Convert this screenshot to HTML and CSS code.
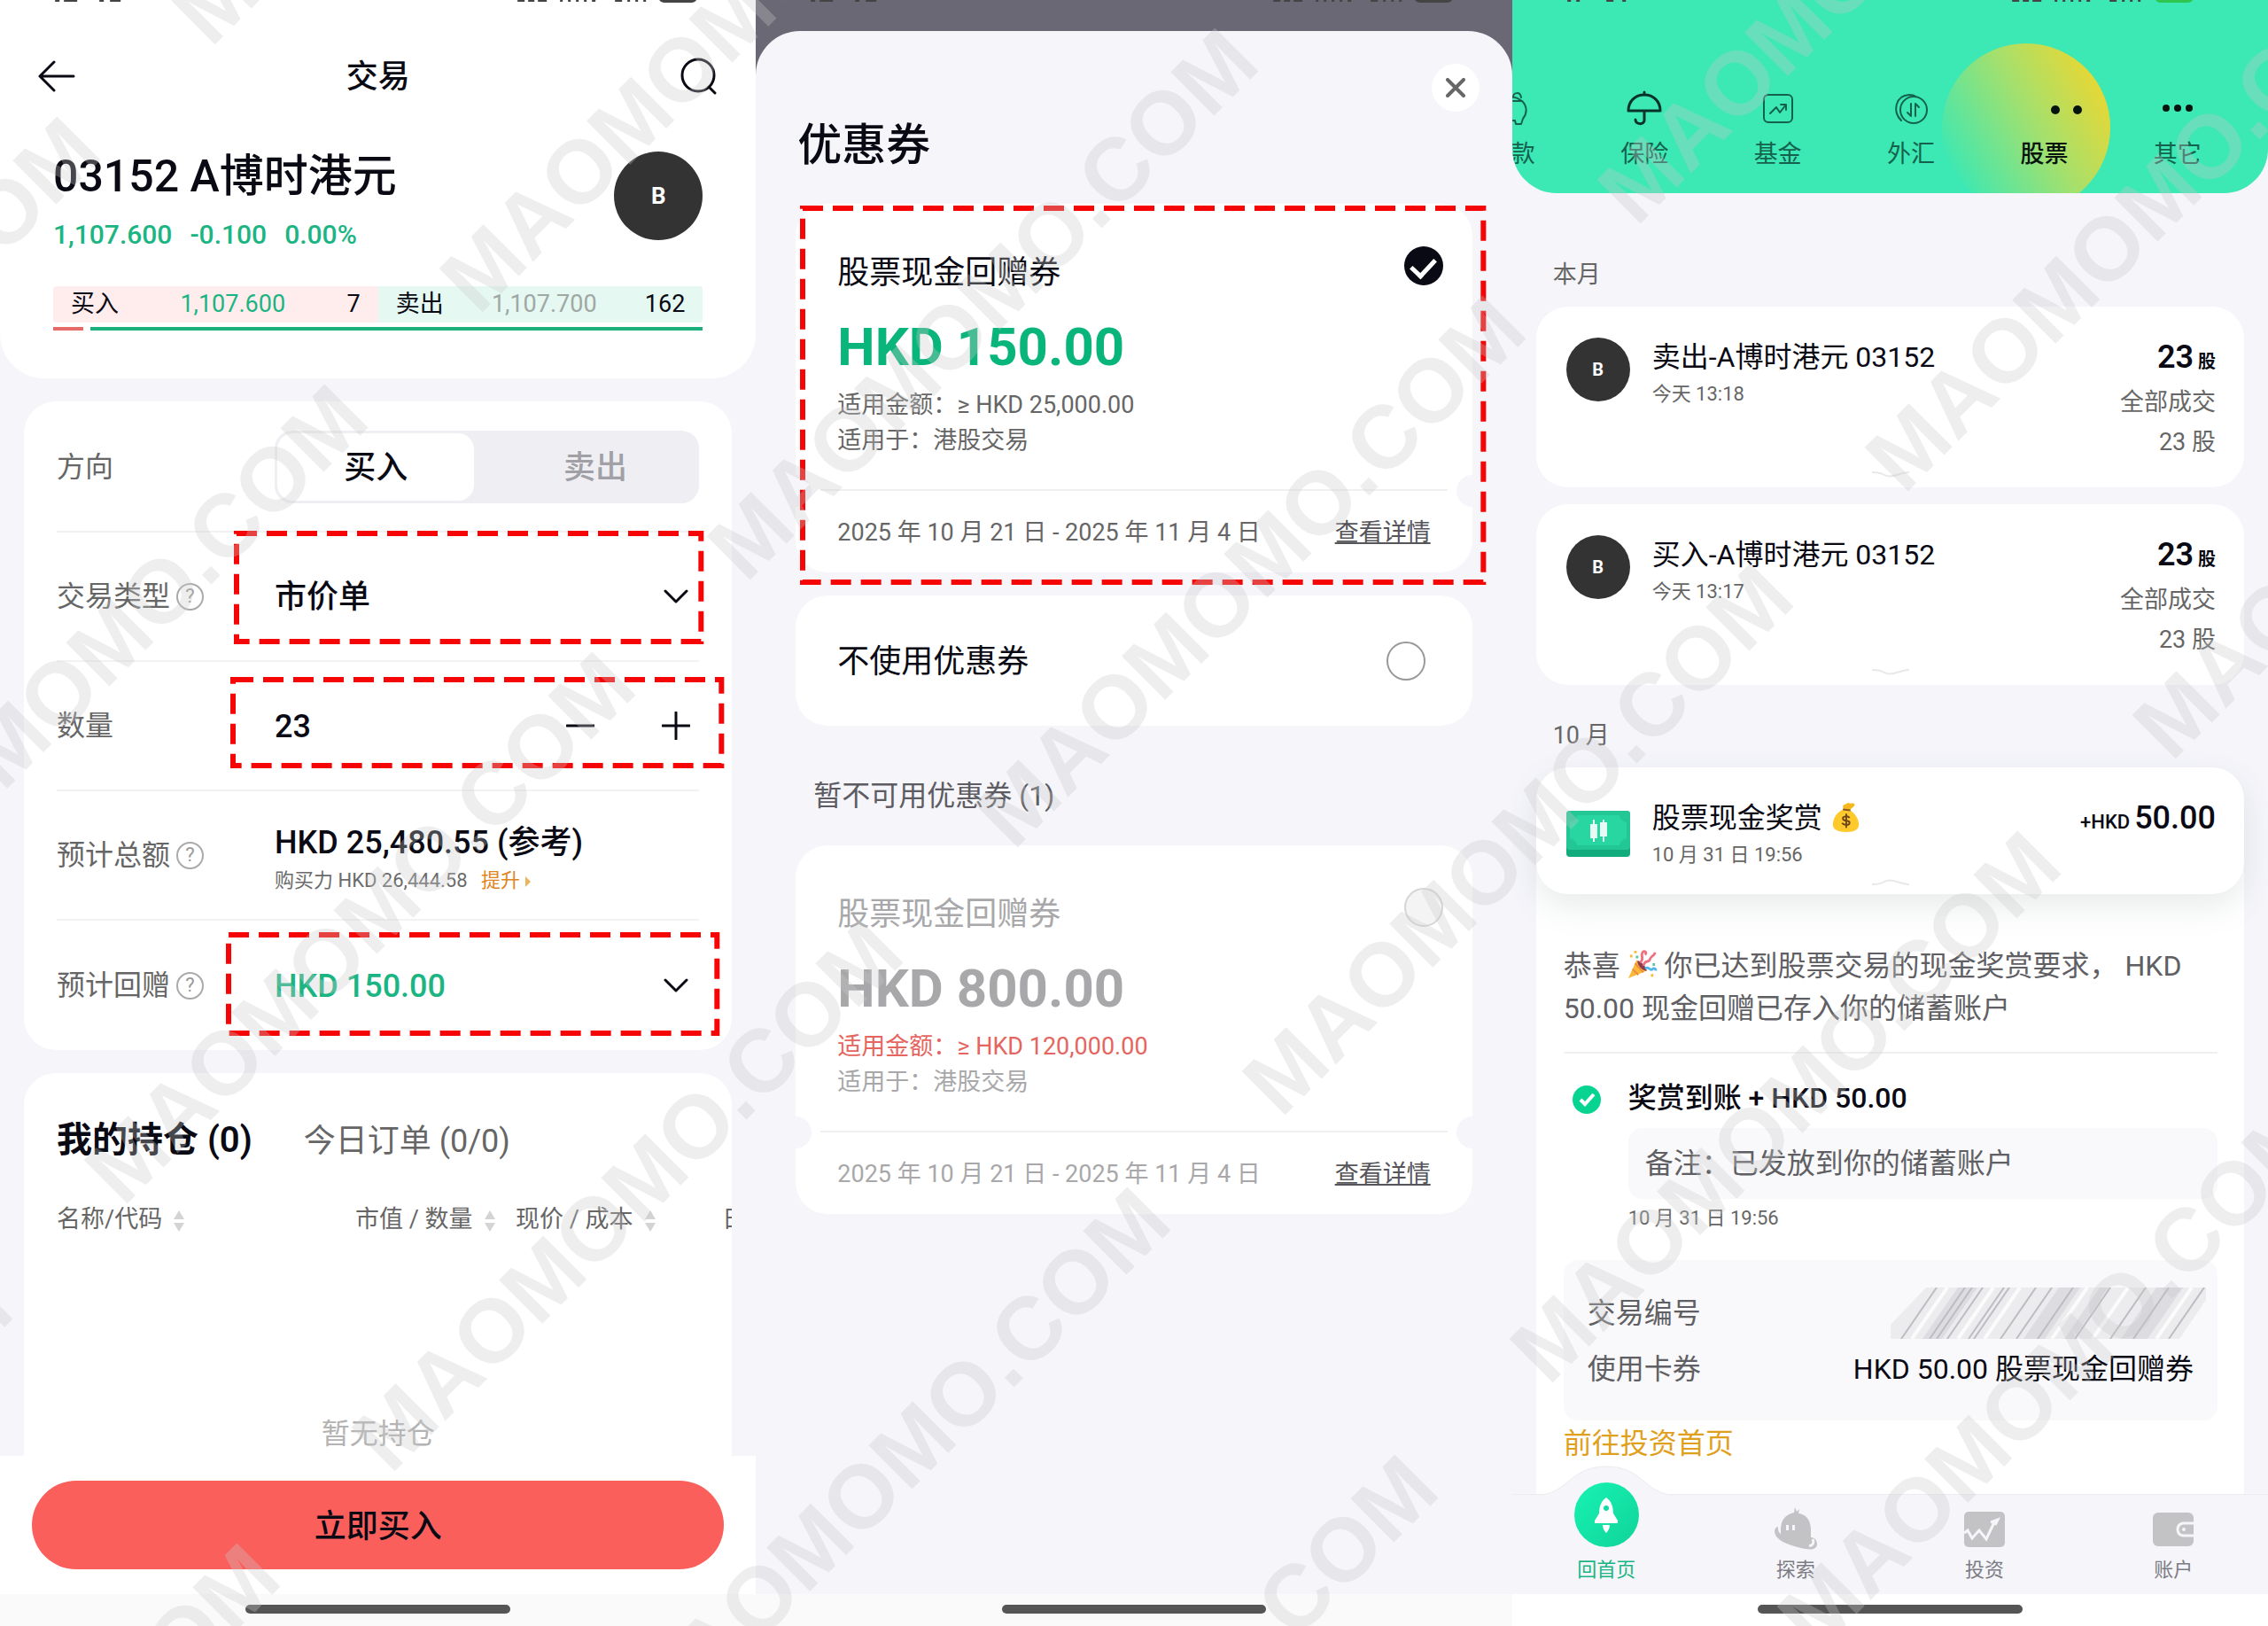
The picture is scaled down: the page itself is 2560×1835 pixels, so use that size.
FILE: index.html
```html
<!DOCTYPE html>
<html lang="zh-CN">
<head>
    <meta charset="UTF-8">
    <meta name="viewport" content="width=device-width, initial-scale=1.0">
    <title>股票交易</title>
    <link rel="stylesheet" href="styles.css">
</head>
<body>
    <div class="screens">

        <!-- 交易 -->
        <section class="screen">
            <header class="quote">
                <svg class="status" viewBox="0 0 853 4" aria-hidden="true">
                    <path d="M62 1h5M72 1h15M112 1h5M124 1h12M584 1h8M596 1h7M607 1h10M632 1h3M641 1h3M650 1h3M659 1h3M668 1h4M694 1h8M708 1h3M717 1h3M726 1h3" />
                    <path class="status-battery" d="M744 0h42q-2 3-6 3h-30q-4 0-6-3z" />
                </svg>
                <div class="appbar">
                    <button class="icon-btn" aria-label="返回">
                        <svg width="42" height="36" viewBox="0 0 42 36"><path d="M40 18H2M18 2L2 18l16 16" /></svg>
                    </button>
                    <h1>交易</h1>
                    <button class="icon-btn" aria-label="搜索">
                        <svg width="42" height="42" viewBox="0 0 42 42"><circle cx="20" cy="20" r="18" /><path d="M32 33l7 7" /></svg>
                    </button>
                </div>
                <div class="quote-head">
                    <div>
                        <h2>03152 A博时港元</h2>
                        <p class="price"><span>1,107.600</span><span>-0.100</span><span>0.00%</span></p>
                    </div>
                    <span class="avatar avatar-lg">B</span>
                </div>
                <div class="book">
                    <div class="bid"><span>买入</span><span class="up">1,107.600</span><span>7</span></div>
                    <div class="ask"><span>卖出</span><span class="flat">1,107.700</span><span>162</span></div>
                </div>
                <div class="depth"><i class="depth-bid"></i><i class="depth-ask"></i></div>
            </header>

            <form class="card order">
                <div class="row">
                    <span class="label">方向</span>
                    <div class="value">
                        <div class="segment">
                            <button type="button" class="active">买入</button>
                            <button type="button">卖出</button>
                        </div>
                    </div>
                </div>
                <div class="row">
                    <span class="label"><label for="type">交易类型</label><button type="button" class="help" aria-label="说明">?</button></span>
                    <div class="value">
                        <select id="type"><option>市价单</option></select>
                        <svg class="chevron" width="28" height="16" viewBox="0 0 28 16"><path d="M2 2l12 12L26 2" /></svg>
                        <span class="mark mark-type"><svg><rect width="100%" height="100%" /></svg></span>
                    </div>
                </div>
                <div class="row">
                    <span class="label"><label for="qty">数量</label></span>
                    <div class="value">
                        <input id="qty" type="text" value="23">
                        <div class="stepper">
                            <button type="button" class="icon-btn" aria-label="减少"><svg width="32" height="32" viewBox="0 0 32 32"><path d="M1 16h30" /></svg></button>
                            <button type="button" class="icon-btn" aria-label="增加"><svg width="32" height="32" viewBox="0 0 32 32"><path d="M1 16h30M16 1v30" /></svg></button>
                        </div>
                        <span class="mark mark-qty"><svg><rect width="100%" height="100%" /></svg></span>
                    </div>
                </div>
                <div class="row">
                    <span class="label">预计总额<button type="button" class="help" aria-label="说明">?</button></span>
                    <div class="value value-stack">
                        <strong>HKD 25,480.55 (参考)</strong>
                        <small>购买力 HKD 26,444.58 <a href="#">提升<svg width="8" height="12" viewBox="0 0 8 12"><path d="M1 0l6 6-6 6z" /></svg></a></small>
                    </div>
                </div>
                <div class="row">
                    <span class="label"><label for="rebate">预计回赠</label><button type="button" class="help" aria-label="说明">?</button></span>
                    <div class="value">
                        <select id="rebate" class="green"><option>HKD 150.00</option></select>
                        <svg class="chevron" width="28" height="16" viewBox="0 0 28 16"><path d="M2 2l12 12L26 2" /></svg>
                        <span class="mark mark-rebate"><svg><rect width="100%" height="100%" /></svg></span>
                    </div>
                </div>
            </form>

            <section class="card holdings">
                <nav class="tabs">
                    <a href="#" class="active">我的持仓 (0)</a>
                    <a href="#">今日订单 (0/0)</a>
                </nav>
                <table>
                    <thead>
                        <tr>
                            <th class="col-name">名称/代码<svg class="sort" viewBox="0 0 14 24"><path d="M7 0l6 10H1zM7 24l6-10H1z" /></svg></th>
                            <th class="col-value">市值 / 数量<svg class="sort" viewBox="0 0 14 24"><path d="M7 0l6 10H1zM7 24l6-10H1z" /></svg></th>
                            <th class="col-cost">现价 / 成本<svg class="sort" viewBox="0 0 14 24"><path d="M7 0l6 10H1zM7 24l6-10H1z" /></svg></th>
                            <th>日</th>
                        </tr>
                    </thead>
                </table>
                <p class="empty">暂无持仓</p>
            </section>

            <div class="buy-bar"><button class="buy">立即买入</button></div>
            <div class="home"><i></i></div>
        </section>

        <!-- 优惠券 -->
        <section class="screen screen-dim">
            <svg class="status" viewBox="0 0 853 4" aria-hidden="true">
                <path d="M62 1h5M72 1h15M112 1h5M124 1h12M584 1h8M596 1h7M607 1h10M632 1h3M641 1h3M650 1h3M659 1h3M668 1h4M694 1h8M708 1h3M717 1h3M726 1h3" />
                <path class="status-battery" d="M744 0h42q-2 3-6 3h-30q-4 0-6-3z" />
            </svg>
            <div class="sheet">
                <button class="close" aria-label="关闭"><svg width="22" height="22" viewBox="0 0 22 22"><path d="M2 2l18 18M20 2L2 20" /></svg></button>
                <h2 class="sheet-title">优惠券</h2>

                <article class="coupon">
                    <div class="coupon-top">
                        <label for="c150">股票现金回赠券</label>
                        <input type="radio" name="coupon" id="c150" checked>
                    </div>
                    <p class="amount">HKD 150.00</p>
                    <p class="term">适用金额：≥ HKD 25,000.00</p>
                    <p class="term">适用于：港股交易</p>
                    <footer><span>2025 年 10 月 21 日 - 2025 年 11 月 4 日</span><a href="#">查看详情</a></footer>
                    <span class="mark mark-coupon"><svg><rect width="100%" height="100%" /></svg></span>
                </article>

                <div class="coupon no-coupon">
                    <label for="c0">不使用优惠券</label>
                    <input type="radio" name="coupon" id="c0">
                </div>

                <h3>暂不可用优惠券 (1)</h3>

                <article class="coupon disabled">
                    <div class="coupon-top">
                        <label for="c800">股票现金回赠券</label>
                        <input type="radio" name="coupon" id="c800" disabled>
                    </div>
                    <p class="amount">HKD 800.00</p>
                    <p class="term unmet">适用金额：≥ HKD 120,000.00</p>
                    <p class="term">适用于：港股交易</p>
                    <footer><span>2025 年 10 月 21 日 - 2025 年 11 月 4 日</span><a href="#">查看详情</a></footer>
                </article>
            </div>
            <div class="home"><i></i></div>
        </section>

        <!-- 交易记录 -->
        <section class="screen">
            <header class="cats">
                <svg class="status" viewBox="0 0 853 4" aria-hidden="true">
                    <path d="M62 1h4M72 1h4M106 1h8M124 1h4M564 1h8M576 1h7M587 1h10M612 1h3M621 1h3M630 1h3M639 1h3M648 1h4M674 1h8M688 1h3M697 1h3M706 1h3" />
                    <path class="status-charge" d="M726 0h42q-2 3-6 3h-30q-4 0-6-3z" />
                </svg>
                <nav class="cat-list">
                    <a href="#">
                        <svg class="thin" viewBox="0 0 40 40"><path d="M4 10C12 4 24 6 32 12c6 6 6 14 1 20l-2 6h-6l-1-4H14l-2 4H8M22 8c0-6 8-7 9 0M22 12h9" /></svg>
                        <span>存款</span>
                    </a>
                    <a href="#">
                        <svg class="bold" viewBox="0 0 40 40"><path d="M20 2v3M2 23C2 12 10 5 20 5s18 7 18 18zM20 23v11c0 5-10 5-10-1" /></svg>
                        <span>保险</span>
                    </a>
                    <a href="#">
                        <svg class="thin" viewBox="0 0 40 40"><rect x="4" y="5" width="32" height="31" rx="5" /><path d="M11 26l7-7 4 6 7-9M23 16h6v6" /></svg>
                        <span>基金</span>
                    </a>
                    <a href="#">
                        <svg class="thin" viewBox="0 0 40 40"><circle cx="23" cy="22" r="15" /><path d="M9 34C-1 24 2 6 18 5c3 0 5 0 7 2M20 15v14l-4-4M25 29V15l4 4" /></svg>
                        <span>外汇</span>
                    </a>
                    <a href="#" class="active">
                        <svg class="dots" viewBox="0 0 40 40"><circle cx="33" cy="22" r="5" /><circle cx="58" cy="22" r="5" /></svg>
                        <span>股票</span>
                    </a>
                    <a href="#">
                        <svg class="dots" viewBox="0 0 40 40"><circle cx="7" cy="20" r="4" /><circle cx="20" cy="20" r="4" /><circle cx="33" cy="20" r="4" /></svg>
                        <span>其它</span>
                    </a>
                </nav>
            </header>

            <main class="records">
                <h3>本月</h3>
                <article class="card record">
                    <div class="record-main">
                        <span class="avatar">B</span>
                        <div class="record-info"><h4>卖出-A博时港元 03152</h4><time>今天 13:18</time></div>
                        <div class="record-side"><p class="total">23 <small>股</small></p><p>全部成交</p><p>23 股</p></div>
                    </div>
                    <svg class="handle" viewBox="0 0 44 8"><path d="M1 1q9 0 14 3t14 0 14-3" /></svg>
                </article>
                <article class="card record">
                    <div class="record-main">
                        <span class="avatar">B</span>
                        <div class="record-info"><h4>买入-A博时港元 03152</h4><time>今天 13:17</time></div>
                        <div class="record-side"><p class="total">23 <small>股</small></p><p>全部成交</p><p>23 股</p></div>
                    </div>
                    <svg class="handle" viewBox="0 0 44 8"><path d="M1 1q9 0 14 3t14 0 14-3" /></svg>
                </article>

                <h3>10 月</h3>
                <article class="card record open">
                    <div class="record-main">
                        <svg class="cash" viewBox="0 0 72 52">
                            <rect width="72" height="52" rx="4" fill="#12ab7c" />
                            <rect width="72" height="44" rx="4" fill="#22c795" />
                            <path d="M12 5h48q0 6 8 8v18q-8 2-8 8H12q0-6-8-8V13q8-2 8-8z" fill="#27d6a0" />
                            <path d="M31 10v25M42 10v25" stroke="#e6fbf3" stroke-width="2" />
                            <path d="M27 15h8v16h-8zM38 13h8v16h-8z" fill="#e6fbf3" />
                        </svg>
                        <div class="record-info">
                            <h4>股票现金奖赏
                                <svg class="emoji" viewBox="0 0 36 36">
                                    <path d="M22 8c7 4 12 11 12 18 0 6-5 9-15 9S3 32 3 26C3 18 9 10 16 8z" fill="#fdc92b" />
                                    <path d="M16 8c-1-3-2-5 1-6 2 0 3-2 5-2 1 2 6-1 7 2 0 3-4 4-6 7z" fill="#f7b81c" />
                                    <path d="M15 8l9 1" stroke="#8a5a20" stroke-width="2" />
                                    <path d="M23 18c-2-3-9-2-8 1 1 4 8 1 8 5 0 3-7 3-9 0M19 13v17" fill="none" stroke="#6b4418" stroke-width="2" />
                                </svg>
                            </h4>
                            <time>10 月 31 日 19:56</time>
                        </div>
                        <div class="record-side"><p class="total"><small class="cur">+HKD</small> 50.00</p></div>
                    </div>
                    <svg class="handle" viewBox="0 0 44 8"><path d="M1 7q9 0 14-3t14 0 14 3" /></svg>
                </article>

                <section class="detail">
                    <p class="message">恭喜 <svg class="emoji" viewBox="0 0 36 36">
                            <path d="M1 35L11 13l12 13z" fill="#f9b93a" />
                            <path d="M6 24l7 7M9 17l10 11" stroke="#f38a3c" stroke-width="2" />
                            <path d="M12 14c4 0 11 8 11 12-4 1-12-7-11-12z" fill="#8b3d4f" />
                            <path d="M15 16c6-4 0-8 3-12 2-3 6 0 3 3M19 20c3-9 6-2 8-8 2-5 5-3 6-8" fill="none" stroke="#f0707f" stroke-width="3" />
                            <path d="M21 23c6-3 5 4 9 1 2-2 4 0 4 2" fill="none" stroke="#4db4ec" stroke-width="3" />
                            <path d="M3 7h3v3H3zM8 2h3v3H8zM28 30h3v3h-3z" fill="#f9b93a" />
                            <path d="M30 17h3v3h-3zM10 8h3v3h-3z" fill="#5cc8a0" />
                        </svg> 你已达到股票交易的现金奖赏要求， HKD 50.00 现金回赠已存入你的储蓄账户</p>
                    <div class="step">
                        <svg class="done" viewBox="0 0 32 32"><circle cx="16" cy="16" r="16" /><path d="M9 16l5 5 10-11" /></svg>
                        <div>
                            <h4>奖赏到账 + HKD 50.00</h4>
                            <p class="note">备注：已发放到你的储蓄账户</p>
                            <time>10 月 31 日 19:56</time>
                        </div>
                    </div>
                    <dl class="facts">
                        <div><dt>交易编号</dt><dd class="hidden-id"><svg viewBox="0 0 356 58" preserveAspectRatio="none">
                            <path d="M40 0h316v14L326 58H0V42z" fill="#ececef" />
                            <path d="M76 0L36 58h22L98 0zM190 0l-40 58h24l40-58zM236 0l-40 58h10l40-58zM300 0l-40 58h30l40-58z" fill="#dcdce1" />
                            <path d="M52 0L12 58M84 0L44 58M92 0L52 58M104 0L64 58M128 0L88 58M134 0L94 58M164 0l-40 58M182 0l-40 58M206 0l-40 58M248 0l-40 58M288 0l-40 58M314 0l-40 58M354 0l-40 58" stroke="#bcbcc2" stroke-width="2" />
                            <path d="M64 0L24 58M116 0L76 58M146 0l-40 58M222 0l-40 58M268 0l-40 58M340 0l-40 58" stroke="#fbfbfc" stroke-width="4" />
                        </svg></dd></div>
                        <div><dt>使用卡券</dt><dd>HKD 50.00 股票现金回赠券</dd></div>
                    </dl>
                    <a href="#" class="more">前往投资首页</a>
                </section>
            </main>

            <nav class="bottom-nav">
                <a href="#" class="active">
                    <svg class="hump" viewBox="0 0 150 34"><path d="M0 33C32 31 34 1 75 1s43 30 75 32" /></svg>
                    <span class="rocket"><svg viewBox="0 0 30 40"><path d="M15 0c6 4 8 11 8 18l5 8v3H2v-3l5-8C7 11 9 4 15 0zM11 31h8c0 4-2 7-4 9-2-2-4-5-4-9z" /><circle cx="15" cy="12" r="3" /></svg></span>
                    <span>回首页</span>
                </a>
                <a href="#">
                    <svg class="nav-icon nav-buddy" viewBox="0 0 48 48">
                        <path d="M23 0l2 5 3-3-1 5c9 1 14 8 14 19v8c5 0 7 4 7 8-1 6-7 6-13 5C24 45 10 41 4 35c-5-4-5-11-1-13 1 0 1 1 1 2 0 3 1 5 3 6V25C7 15 12 8 22 6z" />
                        <path class="cut" d="M13 20h3v6h-3zM20 20h3v6h-3z" />
                        <path class="cut-line" d="M43 36c2 4 0 8-4 7" />
                    </svg>
                    <span>探索</span>
                </a>
                <a href="#">
                    <svg class="nav-icon" viewBox="0 0 46 40"><rect width="46" height="40" rx="5" /><path class="cut-line" d="M0 24l4-3 5 9 8-9 8 10 9-19M30 12l8-3-3 6" /></svg>
                    <span>投资</span>
                </a>
                <a href="#">
                    <svg class="nav-icon" viewBox="0 0 46 40"><rect y="1" width="46" height="38" rx="6" /><path class="cut-line" d="M46 13H34q-6 1-6 7t6 7h12" /><circle class="cut" cx="35" cy="20" r="2" /></svg>
                    <span>账户</span>
                </a>
            </nav>
            <div class="home home-white"><i></i></div>
        </section>
    </div>

    <svg class="watermark" aria-hidden="true">
        <defs><text id="wm" transform="rotate(-45)">MAOMOMO.COM</text></defs>
        <use href="#wm" x="238" y="55" />
        <use href="#wm" x="540" y="357" />
        <use href="#wm" x="842" y="659" />
        <use href="#wm" x="1144" y="961" />
        <use href="#wm" x="1446" y="1263" />
        <use href="#wm" x="1748" y="1565" />
        <use href="#wm" x="2050" y="1867" />
        <use href="#wm" x="1847" y="257" />
        <use href="#wm" x="2149" y="559" />
        <use href="#wm" x="2451" y="861" />
        <use href="#wm" x="-465" y="759" />
        <use href="#wm" x="-163" y="1061" />
        <use href="#wm" x="139" y="1363" />
        <use href="#wm" x="441" y="1665" />
        <use href="#wm" x="743" y="1967" />
        <use href="#wm" x="1045" y="2269" />
        <use href="#wm" x="-564" y="2067" />
        <use href="#wm" x="-262" y="2369" />
    </svg>
</body>
</html>
```
FILE: styles.css
```css
* {
    box-sizing: border-box;
    margin: 0;
    padding: 0;
}

body {
    position: relative;
    font-family: Roboto, "Noto Sans CJK SC", sans-serif;
    font-size: 32px;
    line-height: 44px;
    color: #0a0a14;
    background-color: #f5f5fa;
}

h1, h2, h3, h4, th {
    font-weight: 500;
}

a {
    color: inherit;
    text-decoration: none;
}

button, input, select {
    font: inherit;
    color: inherit;
    background: none;
    border: none;
    outline: none;
}

svg {
    display: block;
    fill: none;
}

.screens {
    display: grid;
    grid-template-columns: repeat(3, minmax(0, 1fr));
    min-height: 100vh;
}

.screen {
    display: flex;
    flex-direction: column;
    background-color: #f5f5fa;
    overflow: hidden;
}

.status {
    width: 100%;
    height: 4px;
    stroke: #444;
    stroke-width: 2;
}

.status-battery {
    fill: #444;
    stroke: none;
}

.status-charge {
    fill: #2fc64f;
    stroke: none;
}

.card {
    margin: 0 27px;
    background-color: #fff;
    border-radius: 36px;
}

.avatar {
    display: flex;
    align-items: center;
    justify-content: center;
    flex: none;
    width: 72px;
    height: 72px;
    border-radius: 50%;
    background-color: #333;
    color: #fff;
    font-size: 20px;
    font-weight: 700;
}

.avatar-lg {
    width: 100px;
    height: 100px;
    margin-top: 3px;
    font-size: 26px;
}

.icon-btn svg {
    stroke: #0a0a14;
    stroke-width: 3;
    stroke-linecap: round;
    stroke-linejoin: round;
}

/* red dashed frames */
.mark {
    position: absolute;
    pointer-events: none;
}

.mark svg {
    width: 100%;
    height: 100%;
    overflow: visible;
    stroke: #f50505;
    stroke-width: 6;
    stroke-dasharray: 23 11;
}

.mark-type { inset: 1px -2px 21px -43px; }
.mark-qty { inset: 20px -25px 27px -47px; }
.mark-rebate { inset: 16px -20px 19px -52px; }
.mark-coupon { inset: 5px -13px -11px 8px; }

/* quote */
.quote {
    padding-bottom: 54px;
    background-color: #fff;
    border-radius: 0 0 50px 50px;
}

.appbar {
    display: flex;
    align-items: center;
    justify-content: space-between;
    height: 72px;
    margin-top: 46px;
    padding: 0 43px;
}

.appbar h1 {
    padding-top: 2px;
    font-size: 36px;
}

.quote-head {
    display: flex;
    justify-content: space-between;
    margin-top: 46px;
    padding: 0 60px;
}

.quote-head h2 {
    font-size: 50px;
    line-height: 62px;
}

.price {
    display: flex;
    gap: 20px;
    margin-top: 15px;
    font-size: 30px;
    line-height: 40px;
    font-weight: 500;
    color: #1bb584;
}

.book {
    display: flex;
    margin: 38px 60px 5px;
    font-size: 27px;
    line-height: 41px;
    border-radius: 4px;
    overflow: hidden;
}

.book div {
    display: flex;
    flex: 1;
    justify-content: space-between;
    padding: 0 20px;
}

.bid { background-color: #ffeded; }
.ask { background-color: #e5f8f1; }
.up { color: #1bb584; }
.flat { color: #a0a8a5; }

.depth {
    display: flex;
    gap: 8px;
    height: 4px;
    margin: 0 60px;
}

.depth-bid {
    width: 34px;
    background-color: #e56a6a;
}

.depth-ask {
    flex: 1;
    background-color: #1bb07c;
}

/* order form */
.order {
    margin-top: 26px;
    padding: 2px 37px 0;
}

.row {
    display: grid;
    grid-template-columns: 246px minmax(0, 1fr);
    min-height: 146px;
    border-bottom: 2px solid #f2f2f4;
}

.row:last-child {
    border-bottom: none;
}

.label {
    display: flex;
    align-items: center;
    gap: 7px;
    color: #666;
}

.help {
    width: 31px;
    height: 31px;
    border: 2px solid #aaa;
    border-radius: 50%;
    color: #999;
    font-size: 22px;
    line-height: 26px;
}

.value {
    position: relative;
    display: flex;
    align-items: center;
    font-size: 36px;
    font-weight: 500;
}

.value select, .value input {
    flex: 1;
    min-width: 0;
    padding-top: 2px;
    appearance: none;
}

.value-stack {
    flex-direction: column;
    align-items: flex-start;
    justify-content: center;
    padding-top: 8px;
    line-height: 50px;
}

.value-stack strong {
    font-weight: 500;
}

.value-stack small {
    font-size: 22px;
    line-height: 36px;
    font-weight: 400;
    color: #6b6b6b;
}

.value-stack a {
    margin-left: 10px;
    color: #e08420;
}

.value-stack svg {
    display: inline-block;
    margin-left: 5px;
    fill: #e8b45c;
}

.value .green {
    color: #1bb584;
}

.chevron {
    margin-right: 12px;
    stroke: #0a0a14;
    stroke-width: 3;
    stroke-linecap: round;
    stroke-linejoin: round;
}

.segment {
    display: flex;
    width: 100%;
    height: 82px;
    padding: 3px;
    border-radius: 20px;
    background-color: #efeff3;
}

.segment button {
    flex: 1;
    padding: 2px 0 0 22px;
    color: #a0a0a6;
}

.segment .active {
    flex: 0 0 47%;
    padding: 2px 0 0;
    border-radius: 18px;
    background-color: #fff;
    color: #0a0a14;
}

.stepper {
    display: flex;
    gap: 76px;
    margin-right: 10px;
}

/* holdings */
.holdings {
    flex: 1;
    margin-top: 26px;
    padding: 51px 0 0 37px;
    border-radius: 36px 36px 0 0;
    overflow: hidden;
}

.tabs {
    display: flex;
    align-items: baseline;
    gap: 58px;
    line-height: 50px;
    font-size: 36px;
    color: #666;
}

.tabs .active {
    font-size: 40px;
    font-weight: 600;
    color: #0a0a14;
}

.holdings table {
    width: 880px;
    table-layout: fixed;
    border-collapse: collapse;
    margin-top: 41px;
    font-size: 27px;
    color: #666;
}

.holdings th {
    font-weight: 400;
    text-align: left;
}

.col-name { width: 337px; }
.col-value { width: 181px; }
.col-cost { width: 233px; }

.sort {
    display: inline-block;
    width: 14px;
    height: 24px;
    margin-left: 12px;
    vertical-align: middle;
    fill: #d4d4d6;
}

.empty {
    margin-top: 198px;
    padding-right: 37px;
    text-align: center;
    color: #b3b3b3;
}

.buy-bar {
    padding: 28px 36px;
    background-color: #fff;
}

.buy {
    width: 100%;
    height: 100px;
    padding-top: 3px;
    border-radius: 50px;
    background-color: #fb5f5c;
    font-size: 36px;
    font-weight: 500;
}

.home {
    padding: 12px 0 14px;
    background-color: #fafafa;
}

.home-white {
    background-color: #fff;
}

.home i {
    display: block;
    width: 35%;
    height: 10px;
    margin: 0 auto;
    border-radius: 5px;
    background-color: #555;
}

/* coupons */
.screen-dim {
    background-color: #696874;
}

.sheet {
    display: flex;
    flex: 1;
    flex-direction: column;
    margin-top: 31px;
    padding: 37px 45px 0;
    border-radius: 50px 50px 0 0;
    background-color: #f5f5fa;
}

.close {
    display: flex;
    align-items: center;
    justify-content: center;
    align-self: flex-end;
    width: 54px;
    height: 54px;
    margin-right: -8px;
    border-radius: 50%;
    background-color: #fff;
}

.close svg {
    stroke: #666;
    stroke-width: 4;
    stroke-linecap: round;
}

.sheet-title {
    margin: 8px 2px 36px;
    font-size: 50px;
    line-height: 60px;
}

.sheet h3 {
    margin: 59px 20px 36px;
    font-size: 32px;
    line-height: 40px;
    font-weight: 400;
    color: #5c5c62;
}

.coupon {
    position: relative;
    padding: 48px 0 0;
    border-radius: 36px;
    background-color: #fff;
    font-size: 27px;
    line-height: 40px;
    color: #666;
}

/* side notches at the tear line */
.coupon::before, .coupon::after {
    content: "";
    position: absolute;
    bottom: 74px;
    width: 18px;
    height: 36px;
    background-color: #f5f5fa;
}

.coupon::before {
    left: 0;
    border-radius: 0 18px 18px 0;
}

.coupon::after {
    right: 0;
    border-radius: 18px 0 0 18px;
}

.coupon-top {
    display: flex;
    justify-content: space-between;
    align-items: flex-start;
    height: 54px;
    padding: 0 33px 0 47px;
}

.coupon label {
    padding-top: 2px;
    font-size: 36px;
    line-height: 56px;
    color: #0a0a14;
}

.coupon input {
    appearance: none;
    width: 44px;
    height: 44px;
    border: 2px solid #999;
    border-radius: 50%;
}

.coupon input:checked {
    border: none;
    background-color: #0a0a14;
}

.coupon input:checked::after {
    content: "";
    display: block;
    width: 22px;
    height: 12px;
    margin: 13px auto 0;
    border: solid #fff;
    border-width: 0 0 5px 5px;
    transform: rotate(-47deg);
}

.amount {
    margin-top: 24px;
    padding: 0 47px;
    font-size: 60px;
    line-height: 72px;
    font-weight: 700;
    color: #0ab57c;
}

.amount + .term {
    margin-top: 9px;
}

.term {
    padding: 0 47px;
}

.coupon footer {
    display: flex;
    justify-content: space-between;
    margin: 35px 28px 0;
    padding: 27px 19px 25px;
    border-top: 2px solid #f0f0f2;
}

.coupon footer a {
    color: #55555a;
    text-decoration: underline;
}

.no-coupon {
    display: flex;
    align-items: center;
    justify-content: space-between;
    height: 147px;
    margin-top: 26px;
    padding: 0 53px 0 47px;
}

.no-coupon::before, .no-coupon::after {
    display: none;
}

.disabled, .disabled .amount, .disabled label {
    color: #a8a8aa;
}

.disabled input {
    border-color: #d5d5d5;
    background-color: #f4f4f4;
}

.disabled .unmet {
    color: #e56560;
}

/* categories */
.cats {
    height: 218px;
    border-radius: 0 0 50px 50px;
    background-color: #3ce8b4;
    overflow: hidden;
}

.cat-list {
    display: flex;
    margin: 98px 27px 0 -76px;
}

.cat-list a {
    position: relative;
    display: flex;
    flex: 1;
    flex-direction: column;
    align-items: center;
    gap: 12px;
    font-size: 27px;
    line-height: 40px;
    color: #14624d;
}

.cat-list svg {
    width: 40px;
    height: 40px;
    overflow: visible;
    stroke: #14624d;
    stroke-width: 2;
    stroke-linecap: round;
    stroke-linejoin: round;
}

.cat-list .bold {
    stroke: #0a3328;
    stroke-width: 3;
}

.cat-list .dots {
    fill: #06140f;
    stroke: none;
}

.cat-list .active {
    color: #06140f;
    font-weight: 500;
}

.cat-list .active::before {
    content: "";
    position: absolute;
    top: -53px;
    left: 50%;
    width: 190px;
    height: 190px;
    margin-left: -115px;
    border-radius: 50%;
    background: linear-gradient(60deg, rgba(60, 232, 180, 0) 12%, #a5e06c 55%, #f0d62e 92%);
}

.cat-list .active svg, .cat-list .active span {
    position: relative;
}

/* records */
.records {
    flex: 1;
    padding: 35px 0 0;
}

.records h3 {
    margin: 37px 46px 15px;
    font-size: 27px;
    line-height: 41px;
    font-weight: 400;
    color: #666;
}

.records h4 {
    display: flex;
    align-items: center;
    gap: 9px;
    font-size: 32px;
    font-weight: 400;
}

.records time {
    display: block;
    margin-top: 5px;
    font-size: 22px;
    line-height: 30px;
    color: #666;
}

.record {
    padding: 35px 32px 10px 34px;
}

.record + .record {
    margin-top: 19px;
}

.record-main {
    display: flex;
    gap: 25px;
}

.record-info {
    flex: 1;
}

.record-side {
    font-size: 27px;
    line-height: 45px;
    text-align: right;
    color: #666;
}

.total {
    height: 44px;
    margin-bottom: 7px;
    font-size: 36px;
    line-height: 45px;
    font-weight: 600;
    color: #0a0a14;
}

.total small {
    margin-left: -4px;
    font-size: 20px;
    line-height: 20px;
}

.total .cur {
    margin-right: -4px;
    font-size: 22px;
}

.handle {
    width: 44px;
    height: 8px;
    margin: 10px auto 0;
    stroke: #e8e8ea;
    stroke-width: 2;
}

.open {
    position: relative;
    box-shadow: 0 14px 36px rgba(90, 120, 110, 0.14);
}

.open .record-main {
    align-items: center;
}

.open .record-side {
    align-self: flex-start;
}

.open .total {
    margin-bottom: 0;
    font-weight: 500;
}

.open .handle {
    margin-top: 11px;
}

.cash {
    flex: none;
    width: 72px;
    height: 52px;
}

.emoji {
    display: inline-block;
    width: 34px;
    height: 34px;
    vertical-align: -4px;
}

.detail {
    margin: -30px 27px 0;
    padding: 87px 30px 35px 31px;
    background-color: #fff;
}

.message {
    padding-bottom: 25px;
    line-height: 48px;
    color: #606064;
    border-bottom: 2px solid #f0f0f2;
}

.step {
    display: flex;
    gap: 31px;
    padding: 28px 0 32px 10px;
}

.step > div {
    flex: 1;
}

.step h4 {
    font-weight: 500;
}

.step time {
    margin-top: 7px;
}

.done {
    width: 32px;
    height: 32px;
    margin-top: 8px;
    fill: #08d492;
}

.done path {
    fill: none;
    stroke: #fff;
    stroke-width: 4;
}

.note {
    margin-top: 12px;
    padding: 18px 19px;
    border-radius: 16px;
    background-color: #f9f9fb;
    color: #606064;
}

.facts {
    display: grid;
    gap: 19px;
    padding: 38px 27px 36px;
    border-radius: 16px;
    background-color: #f9f9fb;
}

.facts div {
    display: flex;
    justify-content: space-between;
}

.facts dt {
    color: #606064;
}

.hidden-id svg {
    width: 356px;
    height: 58px;
    margin: -7px -14px -7px 0;
}

.more {
    display: block;
    margin-top: 4px;
    color: #dfa01e;
}

/* bottom navigation */
.bottom-nav {
    position: relative;
    display: grid;
    grid-template-columns: repeat(4, 1fr);
    grid-template-rows: minmax(0, 1fr);
    height: 113px;
    padding-bottom: 14px;
    border-top: 1px solid #ececf0;
    background-color: #f5f5fa;
    font-size: 22px;
    line-height: 26px;
    color: #7c7c84;
}

.bottom-nav a {
    position: relative;
    display: flex;
    flex-direction: column;
    align-items: center;
    justify-content: flex-end;
    gap: 13px;
}

.bottom-nav .active {
    color: #1bb584;
}

.hump {
    position: absolute;
    top: -33px;
    width: 150px;
    height: 34px;
    fill: #f5f5fa;
    stroke: #ececf0;
}

.rocket {
    position: relative;
    display: flex;
    align-items: center;
    justify-content: center;
    flex: none;
    width: 73px;
    height: 73px;
    border-radius: 50%;
    background: linear-gradient(135deg, #17f3b4, #10d399);
}

.rocket svg {
    width: 30px;
    height: 40px;
    fill: #fff;
}

.rocket circle {
    fill: #12dca2;
}

.nav-icon {
    flex: none;
    width: 46px;
    height: 40px;
    fill: #c3c3c6;
}

.nav-buddy {
    width: 48px;
    height: 48px;
    margin-bottom: -3px;
}

.cut {
    fill: #f5f5fa;
}

.cut-line {
    fill: none;
    stroke: #f5f5fa;
    stroke-width: 3;
}

.watermark {
    position: absolute;
    inset: 0;
    width: 100%;
    height: 100%;
    overflow: hidden;
    pointer-events: none;
    font-family: "Liberation Sans", Arial, sans-serif;
    font-size: 101px;
    font-weight: 700;
    fill: #cbcbcb;
    opacity: 0.31;
}
```
